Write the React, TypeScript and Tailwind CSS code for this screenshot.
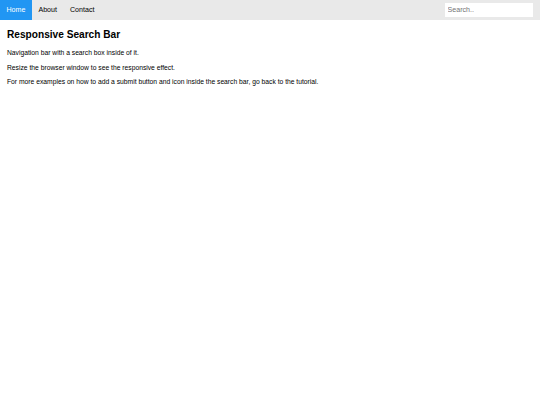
export default function App() {
  return (
    <div className="min-h-[405px] bg-white text-black" style={{ fontFamily: '"Liberation Sans", Arial, sans-serif' }}>
      <nav className="flex items-start bg-[#e9e9e9]">
        <a href="#" className="bg-[#2196F3] px-[6.5px] py-[5.9px] text-[7.1px] leading-[8.2px] text-white">
          Home
        </a>
        <a href="#" className="px-[6.5px] py-[5.9px] text-[7.1px] leading-[8.2px] text-black">
          About
        </a>
        <a href="#" className="px-[6.5px] py-[5.9px] text-[7.1px] leading-[8.2px] text-black">
          Contact
        </a>
        <input
          type="text"
          placeholder="Search.."
          className="mr-[7px] ml-auto mt-[3px] w-[88px] border-none bg-white p-[2.6px] text-[7.1px] leading-[8.8px] outline-none placeholder:text-[#757575]"
        />
      </nav>
      <div className="pl-[7px]">
        <h2 className="mt-[9px] mb-[8.4px] text-[10.15px] font-bold leading-[11.7px]">Responsive Search Bar</h2>
        <p className="my-[6.75px] text-[6.74px] leading-[7.75px]">Navigation bar with a search box inside of it.</p>
        <p className="my-[6.75px] text-[6.74px] leading-[7.75px]">Resize the browser window to see the responsive effect.</p>
        <p className="my-[6.75px] text-[6.74px] leading-[7.75px]">
          For more examples on how to add a submit button and icon inside the search bar, go back to the tutorial.
        </p>
      </div>
    </div>
  );
}
